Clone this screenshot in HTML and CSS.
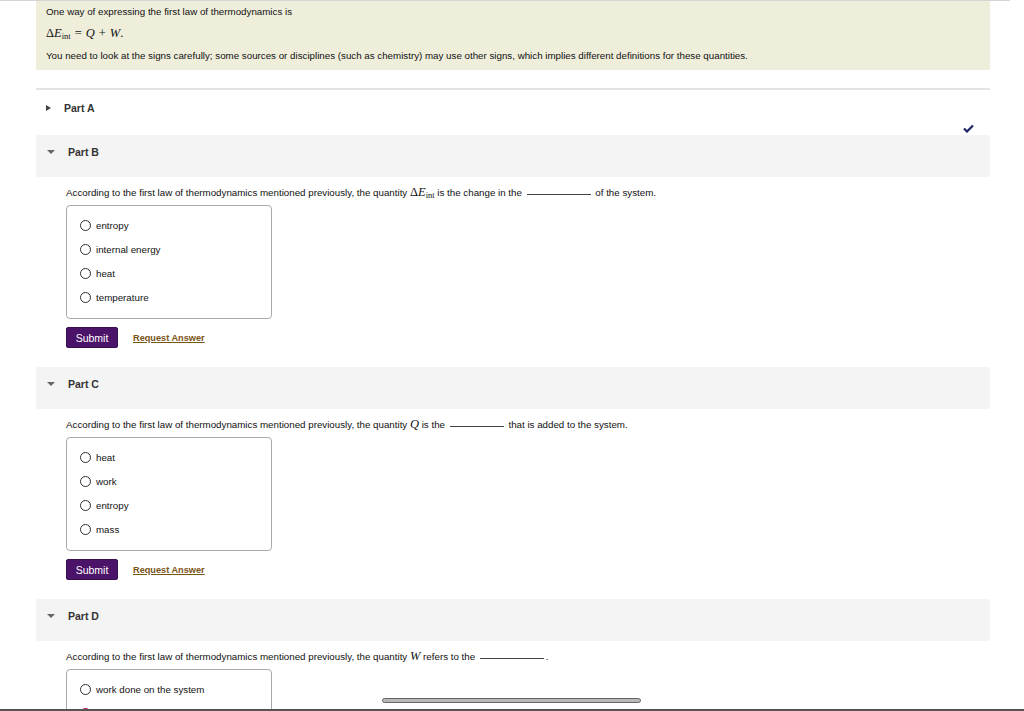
FILE: index.html
```html
<!DOCTYPE html>
<html lang="en">
<head>
<meta charset="utf-8">
<title>First law of thermodynamics</title>
<link rel="stylesheet" href="styles.css">
</head>
<body>
<div class="topline"></div>
<main class="page">
  <section class="intro">
    <p>One way of expressing the first law of thermodynamics is</p>
    <p class="eq"><span class="m">&Delta;<i>E</i><sub>int</sub></span><span class="op">=</span><i>Q</i><span class="op">+</span><i>W</i>.</p>
    <p>You need to look at the signs carefully; some sources or disciplines (such as chemistry) may use other signs, which implies different definitions for these quantities.</p>
  </section>

  <hr class="sep">

  <div class="part-closed">
    <div class="part-title"><span class="tri-right"></span>Part A</div>
    <svg class="check" width="11" height="9" viewBox="0 0 11 9"><path d="M1 4.5 L4 7.5 L10 1.5" fill="none" stroke="#1f2266" stroke-width="2.2"/></svg>
  </div>

  <section class="part">
    <div class="part-head"><span class="tri-down"></span>Part B</div>
    <div class="part-body">
      <p class="q">According to the first law of thermodynamics mentioned previously, the quantity <span class="m">&Delta;<i>E</i><sub>int</sub></span> is the change in the <span class="blank"></span> of the system.</p>
      <div class="choices">
        <label class="opt"><span class="radio"></span>entropy</label>
        <label class="opt"><span class="radio"></span>internal energy</label>
        <label class="opt"><span class="radio"></span>heat</label>
        <label class="opt"><span class="radio"></span>temperature</label>
      </div>
      <div class="actions"><button class="submit">Submit</button><a class="req" href="#">Request Answer</a></div>
    </div>
  </section>

  <section class="part">
    <div class="part-head"><span class="tri-down"></span>Part C</div>
    <div class="part-body">
      <p class="q">According to the first law of thermodynamics mentioned previously, the quantity <span class="m"><i>Q</i></span> is the <span class="blank short"></span> that is added to the system.</p>
      <div class="choices">
        <label class="opt"><span class="radio"></span>heat</label>
        <label class="opt"><span class="radio"></span>work</label>
        <label class="opt"><span class="radio"></span>entropy</label>
        <label class="opt"><span class="radio"></span>mass</label>
      </div>
      <div class="actions"><button class="submit">Submit</button><a class="req" href="#">Request Answer</a></div>
    </div>
  </section>

  <section class="part">
    <div class="part-head"><span class="tri-down"></span>Part D</div>
    <div class="part-body">
      <p class="q">According to the first law of thermodynamics mentioned previously, the quantity <span class="m"><i>W</i></span> refers to the <span class="blank"></span>.</p>
      <div class="choices">
        <label class="opt"><span class="radio"></span>work done on the system</label>
        <label class="opt"><span class="radio on"></span>work done by the system</label>
      </div>
    </div>
  </section>
</main>
<div class="hscroll"><span class="thumb"></span></div>
</body>
</html>
```
FILE: styles.css
```css
html, body {
  margin: 0;
  padding: 0;
  height: 711px;
  overflow: hidden;
  background: #fff;
}
body {
  font-family: "Liberation Sans", Arial, sans-serif;
  font-size: 9.75px;
  color: #111;
  position: relative;
}
.topline {
  height: 1px;
  background: #d4d4d4;
  width: 1010px;
}
.page {
  margin-left: 36px;
  width: 954px;
}
p { margin: 0; }

.intro {
  background: #efeedb;
  height: 69px;
  padding: 5px 10px 0;
  box-sizing: border-box;
  display: flex;
  flex-direction: column;
}
.intro p { line-height: 11px; }
.intro .eq { margin: 9px 0 10px; line-height: 14px; }

/* inline math */
.m, .eq { font-family: "Liberation Serif", "Times New Roman", serif; font-size: 12.5px; }
.m i, .eq i { font-family: "Liberation Serif", "Times New Roman", serif; }
.m sub { font-size: 8.5px; vertical-align: -2px; font-style: normal; line-height: 0; }
.op { margin: 0 4px; }

.sep {
  border: 0;
  height: 2px;
  background: #e4e4e4;
  margin: 18px 0 0;
}

.part-closed {
  height: 45px;
  display: flex;
  justify-content: space-between;
  align-items: flex-start;
  padding: 11px 16px 0 10px;
  box-sizing: border-box;
}
.part-title, .part-head {
  display: flex;
  align-items: center;
  font-weight: bold;
  font-size: 10.5px;
  color: #333;
}
.part-title { margin-top: 1px; }
.check { margin-top: 23px; }

.tri-right {
  width: 0; height: 0;
  border-top: 3px solid transparent;
  border-bottom: 3px solid transparent;
  border-left: 5px solid #444;
  margin-right: 13px;
}
.tri-down {
  width: 0; height: 0;
  border-left: 4px solid transparent;
  border-right: 4px solid transparent;
  border-top: 4px solid #666;
  margin-right: 13px;
}

.part { margin-bottom: 19px; }
.part-head {
  background: #f4f4f4;
  height: 42px;
  padding: 0 0 8px 11px;
  box-sizing: border-box;
}
.part-body { padding: 8px 0 0 30px; }
.q { line-height: 14px; }
.blank {
  display: inline-block;
  width: 64px;
  border-bottom: 1px solid #444;
  margin: 0 2px;
  vertical-align: 1px;
}
.blank.short { width: 54px; }

.choices {
  margin-top: 5px;
  width: 206px;
  height: 114px;
  box-sizing: border-box;
  border: 1px solid #a9a9a9;
  border-radius: 4px;
  padding: 12px 0 0 13px;
  display: flex;
  flex-direction: column;
  gap: 10px;
}
.opt {
  display: flex;
  align-items: center;
  height: 14px;
}
.radio {
  width: 11px;
  height: 11px;
  border: 1.2px solid #333;
  border-radius: 50%;
  margin-right: 5px;
  box-sizing: border-box;
}
.radio.on { background: #c8185a; border-color: #c8185a; }

.actions {
  display: flex;
  align-items: center;
  gap: 15px;
  margin-top: 8px;
}
.submit {
  font-family: "Liberation Sans", Arial, sans-serif;
  font-size: 10.5px;
  color: #fff;
  background: #4b1468;
  border: 1px solid #3a0f52;
  border-radius: 2px;
  width: 52px;
  height: 21px;
  padding: 0;
}
.req {
  font-weight: bold;
  font-size: 9.2px;
  color: #7a5416;
  text-decoration: underline;
}

/* horizontal scrollbar along the window bottom */
.hscroll {
  position: absolute;
  left: 0;
  right: 0;
  bottom: 0;
  height: 12px;
  border-bottom: 2px solid #555;
}
.thumb {
  position: absolute;
  left: 382px;
  top: 1px;
  width: 259px;
  height: 5px;
  box-sizing: border-box;
  background: #b8b8b8;
  border: 1px solid #666;
  border-radius: 3px;
}
```
